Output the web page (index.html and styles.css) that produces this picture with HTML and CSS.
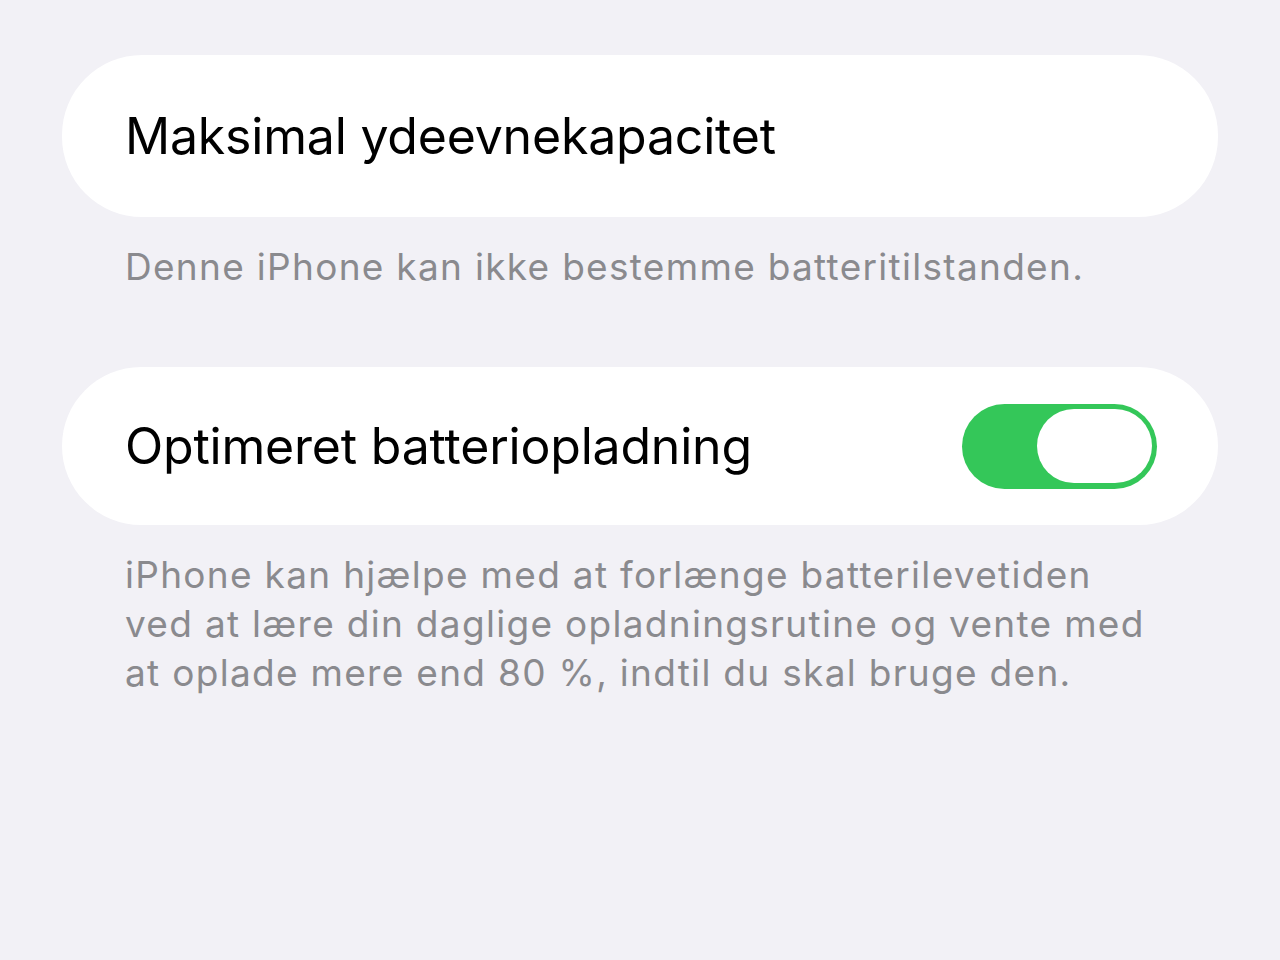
FILE: index.html
```html
<!DOCTYPE html>
<html lang="da">
<head>
    <meta charset="UTF-8">
    <meta name="viewport" content="width=device-width, initial-scale=1.0">
    <title>Batteritilstand</title>
    <link rel="stylesheet" href="styles.css">
</head>
<body>

<main class="settings">
    <section class="group">
        <div class="cell cell-top">
            <span class="cell-label">Maksimal ydeevnekapacitet</span>
        </div>
        <p class="footer">Denne iPhone kan ikke bestemme batteritilstanden.</p>
    </section>

    <section class="group">
        <div class="cell cell-switch">
            <span class="cell-label">Optimeret batteriopladning</span>
            <div class="switch on">
                <div class="knob"></div>
            </div>
        </div>
        <p class="footer">iPhone kan hjælpe med at forlænge batterilevetiden ved at lære din daglige opladningsrutine og vente med at oplade mere end 80&nbsp;%, indtil du skal bruge den.</p>
    </section>
</main>

</body>
</html>
```

FILE: styles.css
```css
body {
    margin: 0;
    padding: 0;
    background-color: #f2f1f6;
    font-family: Inter, "Noto Sans", sans-serif;
    -webkit-font-smoothing: antialiased;
}

.settings {
    padding: 55px 62px 0 62px;
    display: flex;
    flex-direction: column;
    gap: 76px;
}

.group {
    display: flex;
    flex-direction: column;
}

.cell {
    background-color: #ffffff;
    border-radius: 80px;
    display: flex;
    align-items: center;
    justify-content: space-between;
    padding: 0 61px 0 63px;
}

.cell-top {
    height: 162px;
}

.cell-switch {
    height: 158px;
}

.cell-label {
    font-size: 50px;
    color: #000000;
    letter-spacing: -0.2px;
}

.footer {
    margin: 25px 0 0 63px;
    padding-right: 73px;
    font-size: 37px;
    line-height: 49px;
    color: #8a8a8e;
    letter-spacing: 1.3px;
}

/* toggle switch, green when on */
.switch {
    width: 195px;
    height: 85px;
    border-radius: 43px;
    background-color: #34c759;
    display: flex;
    align-items: center;
    justify-content: flex-end;
    padding: 0 5px;
    box-sizing: border-box;
}

.knob {
    width: 115px;
    height: 74px;
    border-radius: 37px;
    background-color: #ffffff;
}
```
